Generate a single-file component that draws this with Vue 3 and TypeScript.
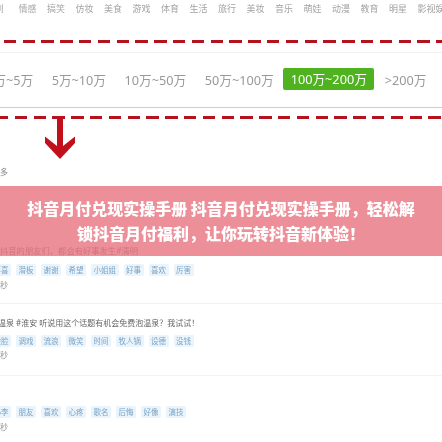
<template>
  <div class="page">
    <div class="soft">
      <nav class="nav">
        <span v-for="item in navItems" :key="item" class="nav-item">{{ item }}</span>
      </nav>
      <div class="dash dash-top"></div>
      <div class="rule rule-light"></div>
      <div class="ranges">
        <span
            v-for="range in ranges"
            :key="range"
            class="range"
            :class="{ active: range === activeRange }"
        >{{ range }}</span>
      </div>
      <div class="rule rule-dark"></div>
      <div class="dash dash-bottom"></div>
      <div class="more">多</div>

      <section v-for="(post, i) in posts" :key="i" class="post" :class="post.cls">
        <div v-if="post.text" class="post-text">{{ post.text }}</div>
        <div class="tags">
          <span v-for="tag in post.tags" :key="tag" class="tag">{{ tag }}</span>
        </div>
        <div class="time">秒</div>
      </section>
    </div>

    <svg class="arrow" width="34" height="44" viewBox="0 0 34 44">
      <path d="M13 0h6v30l12-9.500v6.500L16 43 1 27v-6.500l12 9.500z" fill="#c20f1c" />
    </svg>

    <div class="banner">
      <p>抖音月付兑现实操手册 抖音月付兑现实操手册&#65292;轻松解<br />锁抖音月付福利&#65292;让你玩转抖音新体验&#65281;</p>
    </div>
  </div>
</template>

<script setup lang="ts">
type Post = {
  cls: string
  text: string
  tags: string[]
}

const navItems = ['剧', '情感', '搞笑', '仿妆', '美食', '游戏', '体育', '生活', '旅行', '美妆', '音乐', '萌娃', '动漫', '教育', '明星', '影视娱乐']
const ranges = ['1万~5万', '5万~10万', '10万~50万', '50万~100万', '100万~200万', '>200万']
const activeRange = '100万~200万'

const posts: Post[] = [
  {
    cls: 'post-one',
    text: '抖音的朋友们\uFF0C都会有好事发生#清明',
    tags: ['喜喜', '滑板', '谢谢', '希望', '小姐姐', '好事', '喜欢', '厉害'],
  },
  {
    cls: 'post-two',
    text: '温泉 #淮安 听说用这个话题有机会免费泡温泉\uFF1F我试试\uFF01',
    tags: ['脸脸', '调戏', '流浪', '微笑', '时间', '牧人锅', '设德', '没钱'],
  },
  {
    cls: 'post-three',
    text: '',
    tags: ['小李', '朋友', '喜欢', '心疼', '歌名', '后悔', '好像', '演技'],
  },
]
</script>

<style scoped>
.page {
  position: relative;
  width: 442px;
  height: 442px;
  overflow: hidden;
  background: #fff;
  font-family: "Noto Sans", "Noto Sans CJK SC", sans-serif;
}

.soft {
  filter: blur(0.4px);
}

.nav {
  display: flex;
  gap: 10.500px;
  height: 16px;
  margin-left: -10px;
  align-items: center;
  white-space: nowrap;
  font-size: 9px;
  color: #a3a3a3;
}

.nav-item {
  flex: none;
  width: 18px;
  text-align: center;
}

.dash {
  height: 3px;
  background: repeating-linear-gradient(90deg, #b5121f 0 12.500px, transparent 12.500px 18.800px);
}

.dash-top {
  margin-top: 24px;
  margin-left: -15.500px;
}

.dash-bottom {
  margin-top: 8px;
  margin-left: -3.800px;
}

.rule {
  height: 1px;
}

.rule-light {
  margin-top: 9px;
  background: #f1f1f1;
}

.rule-dark {
  margin-top: 17px;
  background: #cfcfcf;
}

.ranges {
  display: flex;
  align-items: center;
  gap: 18.500px;
  height: 22px;
  margin-top: 15px;
  margin-left: -14px;
  white-space: nowrap;
  font-size: 12.700px;
  color: #999;
}

.range.active {
  padding: 0 7.500px;
  margin: 0 -8px 0 -9px;
  height: 22px;
  line-height: 22px;
  border-radius: 2px;
  background: #4eb31f;
  color: #fff;
}

.more {
  height: 12px;
  margin-top: 47px;
  font-size: 8px;
  line-height: 12px;
  color: #888;
}

.post-text {
  height: 12px;
  line-height: 12px;
  white-space: nowrap;
  color: #666;
}

.tags {
  display: flex;
  gap: 5px;
  height: 12px;
  margin-left: -9px;
  white-space: nowrap;
}

.tag {
  flex: none;
  padding: 0 2.500px;
  line-height: 12px;
  border-radius: 2px;
  font-size: 7.500px;
  background: #e9f4fc;
  color: #7da3c4;
}

.time {
  height: 12px;
  line-height: 12px;
  font-size: 8px;
  color: #999;
}

.post-one {
  margin-top: 67px;
  padding-bottom: 12px;
  border-bottom: 1px solid #f1f1f1;
}

.post-one .post-text {
  font-size: 8.300px;
  color: #b5b5b5;
}

.post-one .tags {
  margin-top: 7px;
}

.post-one .time {
  margin-top: 3px;
}

.post-two {
  margin-top: 13px;
  padding-bottom: 14px;
  border-bottom: 1px solid #f3f3f3;
}

.post-two .post-text {
  margin-left: -2px;
  font-size: 8px;
}

.post-two .tags {
  margin-top: 6px;
}

.post-two .time {
  margin-top: 2px;
}

.post-three {
  margin-top: 30px;
}

.post-three .time {
  margin-top: 3px;
}

.arrow {
  position: absolute;
  left: 44px;
  top: 116px;
}

.banner {
  position: absolute;
  left: 0;
  right: 0;
  top: 186px;
  height: 70px;
  display: flex;
  align-items: center;
  justify-content: center;
  background: rgba(224, 74, 88, 0.62);
}

.banner p {
  margin: 0;
  width: 400px;
  text-align: center;
  font-size: 16px;
  font-weight: 900;
  line-height: 25px;
  color: #fff;
  font-family: "Noto Sans CJK SC", sans-serif;
  filter: blur(0.3px);
}
</style>
